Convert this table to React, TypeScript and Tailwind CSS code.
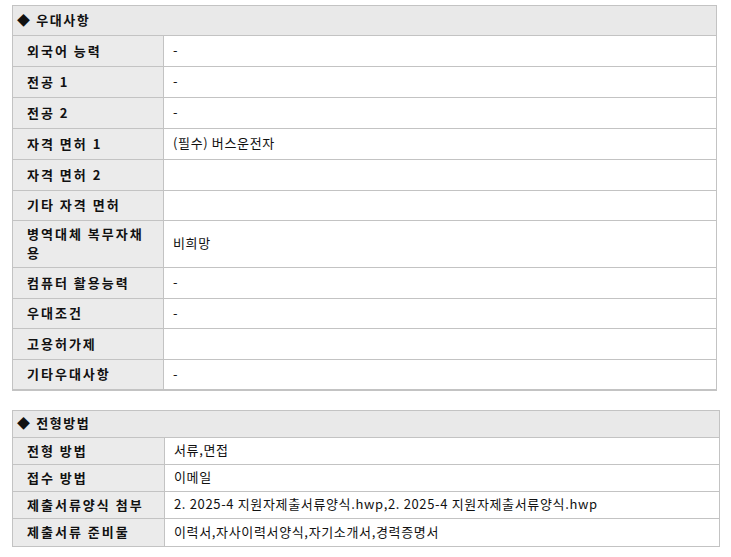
import React from "react"

type Row = { label: React.ReactNode; value: string; h: string }

const benefits: Row[] = [
  { label: "외국어 능력", value: "-", h: "h-[31px]" },
  { label: "전공 1", value: "-", h: "h-[31px]" },
  { label: "전공 2", value: "-", h: "h-[31px]" },
  { label: "자격 면허 1", value: "(필수) 버스운전자", h: "h-[31px]" },
  { label: "자격 면허 2", value: "", h: "h-[31px]" },
  { label: "기타 자격 면허", value: "", h: "h-[30px]" },
  {
    label: (
      <>
        병역대체 복무자채
        <br />용
      </>
    ),
    value: "비희망",
    h: "h-[47px]",
  },
  { label: "컴퓨터 활용능력", value: "-", h: "h-[31px]" },
  { label: "우대조건", value: "-", h: "h-[30px]" },
  { label: "고용허가제", value: "", h: "h-[31px]" },
  { label: "기타우대사항", value: "-", h: "h-[30px]" },
]

const selection: Row[] = [
  { label: "전형 방법", value: "서류,면접", h: "h-[27px]" },
  { label: "접수 방법", value: "이메일", h: "h-[27px]" },
  {
    label: "제출서류양식 첨부",
    value: "2. 2025-4 지원자제출서류양식.hwp,2. 2025-4 지원자제출서류양식.hwp",
    h: "h-[27px]",
  },
  { label: "제출서류 준비물", value: "이력서,자사이력서양식,자기소개서,경력증명서", h: "h-[28px]" },
]

function Section({
  title,
  rows,
  headH,
  labelW,
  className,
}: {
  title: string
  rows: Row[]
  headH: string
  labelW: string
  className: string
}) {
  return (
    <div className={`border-x border-t border-[#c3c3c3] ${className}`}>
      <div
        className={`flex items-center border-b border-[#c3c3c3] bg-[#e9e9e9] pb-[2px] pl-[4px] font-bold tracking-[1.6px] text-[#111] ${headH}`}
      >
        ◆ {title}
      </div>
      {rows.map((r, i) => (
        <div key={i} className={`flex border-b border-[#c3c3c3] ${r.h}`}>
          <div
            className={`flex shrink-0 items-center border-r border-[#c3c3c3] bg-[#ebebeb] pb-[2px] pl-[14px] font-bold leading-[19px] tracking-[2px] text-[#111] ${labelW}`}
          >
            <span>{r.label}</span>
          </div>
          <div className="flex flex-1 items-center bg-white pb-[2px] pl-[9px] tracking-[0.65px] text-[#111]">
            {r.value}
          </div>
        </div>
      ))}
    </div>
  )
}

export default function App() {
  return (
    <div
      className="min-h-screen bg-white pl-[12px] pt-[5px] text-[13px]"
      style={{ fontFamily: '"Noto Sans CJK KR", "Noto Sans", sans-serif' }}
    >
      <Section
        title="우대사항"
        rows={benefits}
        headH="h-[30px]"
        labelW="w-[151px]"
        className="w-[705px] border-b border-b-[#c3c3c3]"
      />
      <div className="h-[19px]" />
      <Section title="전형방법" rows={selection} headH="h-[27px]" labelW="w-[152px]" className="w-[708px]" />
    </div>
  )
}
